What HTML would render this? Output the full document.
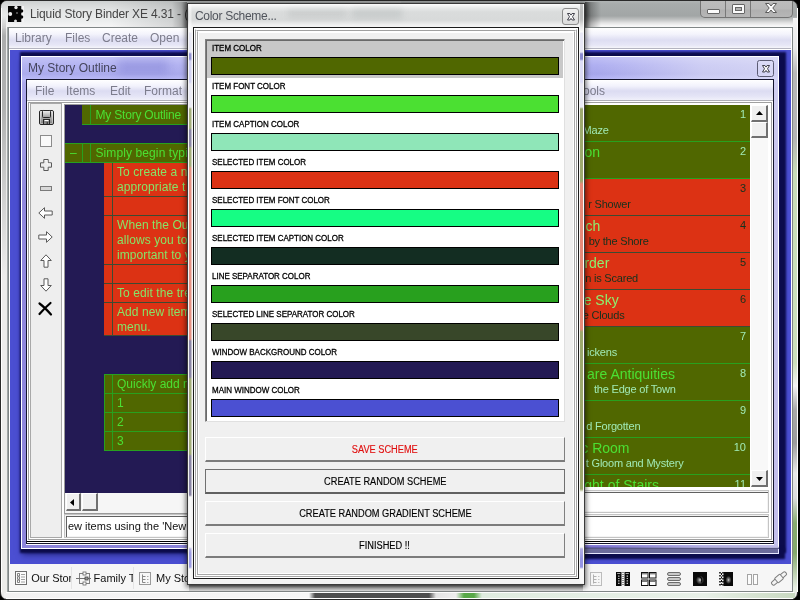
<!DOCTYPE html>
<html><head><meta charset="utf-8"><title>Liquid Story Binder XE 4.31</title>
<style>
*{box-sizing:border-box;margin:0;padding:0}
html,body{width:800px;height:600px;overflow:hidden;background:#000}
body{position:relative;font-family:"Liberation Sans",sans-serif;font-size:12px;color:#000}
#root{position:absolute;left:0;top:0;width:800px;height:600px;will-change:transform}
.a{position:absolute}
.t{position:absolute;white-space:nowrap;line-height:1}
svg{position:absolute;overflow:visible}
#mw{left:0;top:0;width:798px;height:600px;border-radius:7px;background:linear-gradient(180deg,#b0b4b4 0,#a8acac 3px,#a2a6a6 15px,#c4c6c6 19px,#e4e4e4 22px,#f8f8f8 25px,#f8f8f8 27px,#ececec 28px,#ececea 100%);border:1px solid #2a2a2a;overflow:hidden}
#mtitle{left:1px;top:1px;width:400px;height:26px;border-radius:6px 0 0 0;background:linear-gradient(90deg,rgba(120,124,124,0) 0,rgba(120,124,124,0) 110px,rgba(120,124,124,.3) 187px),linear-gradient(180deg,#cdd0d0 0,#d8dada 4px,#e4e6e6 10px,#eceeee 20px,#f4f4f4 25px)}
#mclient{left:8px;top:27px;width:785px;height:565px;border:1px solid #808686;background:#fff}
#mmenu{left:9px;top:28px;width:782px;height:21px;background:linear-gradient(180deg,#ffffff 0,#f4f4fc 6px,#dedef2 12px,#e6e6f6 17px,#f4f4fa 20px);border-bottom:1px solid #b4b4c0}
.menu{font-size:12px;color:#7c7c8c}
#mdi{left:10px;top:50px;width:782px;height:514px;background:#4b4fd2;border-right:1px solid #fff}
#tabbar{left:9px;top:564px;width:783px;height:27px;background:#f6f6f6}
.ol{color:#4be032;font-size:12px;letter-spacing:-0.2px}
.olr{color:#86e468;font-size:12px;letter-spacing:.08px}
.lab{font-size:9px;color:#000;-webkit-text-stroke:.3px #000;transform:scaleX(.887);transform-origin:0 0}
.btn{background:#f0f0f0;border:1px solid #fff;border-right-color:#808080;border-bottom:2px solid #7c7c7c;text-align:center;font-size:10px;line-height:23px;-webkit-text-stroke:.15px currentColor}
.btn span{display:inline-block;transform:scaleX(.923)}
.tt{font-size:14px}
.cp{font-size:11px;letter-spacing:-.2px}
.num{font-size:11px;text-align:right}
</style></head><body>
<div id="root">
<div id="mw" class="a"></div><div id="mtitle" class="a"></div><div id="mclient" class="a"></div><div id="mmenu" class="a"></div><div id="mdi" class="a"></div><div id="tabbar" class="a"></div>
<div class="t" style="left:30px;top:8px;font-size:12px;letter-spacing:-.13px;color:#444">Liquid Story Binder XE 4.31 - (</div>
<div class="t menu" style="left:15px;top:32px;">Library</div>
<div class="t menu" style="left:65px;top:32px;">Files</div>
<div class="t menu" style="left:102px;top:32px;">Create</div>
<div class="t menu" style="left:150px;top:32px;">Open</div>
<svg style="left:8px;top:6px" width="16" height="16" viewBox="0 0 16 16"><rect x="0" y="0" width="13.500" height="16" fill="#050505"/><rect x="13.500" y="0" width="2.500" height="16" fill="#f4f4f4"/><circle cx="8" cy="1.500" r="1.700" fill="#e8e8e8"/><circle cx="2.200" cy="8" r="2" fill="#f0f0f0"/><circle cx="7.500" cy="15" r="1.500" fill="#ddd"/><circle cx="13.500" cy="5" r="1.800" fill="#050505"/><circle cx="13.500" cy="11" r="1.800" fill="#050505"/><circle cx="9" cy="7" r="1" fill="#666"/></svg>
<div class="a" style="left:793px;top:18px;width:4px;height:574px;background:linear-gradient(180deg,#f4f4f4 0,#eaeaea 30px,#b8b8b8 55px,#b4b4b4 120px,#c8dcb8 155px,#cce0bc 345px,#f4f4f4 368px,#a8a8a8 392px,#9c9c9c 425px,#e8e8e8 455px,#dcdcdc 480px,#88ac70 505px,#84a86c 535px,#e8efe4 570px)"></div>
<div class="a" style="left:797px;top:8px;width:1px;height:584px;background:#fff"></div>
<div class="a" style="left:6px;top:592px;width:788px;height:1px;background:#fff"></div>
<div class="a" style="left:4px;top:593px;width:791px;height:5px;background:linear-gradient(90deg,#f2f2f2 0,#f6f6f6 305px,#4e4e4e 311px,#4e4e4e 425px,#e4e4e4 432px,#eeeeee 452px,#58a848 460px,#58a848 470px,#e0ece0 478px,#e8f0e8 700px,#c8d8c0 791px)"></div>
<div class="a" style="left:6px;top:598px;width:787px;height:1px;background:#fff"></div>
<div class="a" style="left:1px;top:8px;width:1px;height:584px;background:#fff"></div>
<div class="a" style="left:2px;top:16px;width:4px;height:260px;background:linear-gradient(180deg,rgba(150,152,152,.0),rgba(150,152,152,.75) 20px,rgba(150,152,152,.7) 90px,rgba(150,152,152,0))"></div>
<div class="a" style="left:7px;top:27px;width:1px;height:565px;background:#a0a6a6"></div>
<div class="a" style="left:700px;top:1px;width:93px;height:17px;border:1px solid #747474;border-top:none;border-radius:0 0 5px 5px;background:linear-gradient(180deg,#bcbcbc 0,#b8b8b8 8px,#b0b0b0 9px,#b6b6b6 16px)"></div>
<div class="a" style="left:725px;top:1px;width:1px;height:16px;background:#787878"></div>
<div class="a" style="left:750px;top:1px;width:1px;height:16px;background:#787878"></div>
<div class="a" style="left:707px;top:9px;width:13px;height:5px;background:#fafafa;border:1px solid #666;border-radius:1px"></div>
<div class="a" style="left:732px;top:4px;width:13px;height:10px;background:#fafafa;border:1px solid #666;border-radius:1px"></div>
<div class="a" style="left:735px;top:7px;width:7px;height:4px;background:#b4b4b4;border:1px solid #666"></div>
<svg style="left:764px;top:3px" width="14" height="11" viewBox="0 0 14 11"><path d="M1.500 .5H5l2 2.500L9 .5h3.500L8.800 5l3.700 4.500H9L7 7 5 9.500H1.500L5.200 5z" fill="#fafafa" stroke="#5c5c5c" stroke-width="1"/></svg>
<div class="a" style="left:21px;top:56px;width:758px;height:493px;background:linear-gradient(180deg,#bcbcf5 0,#acacf0 8px,#a2a2ea 17px,#b2b2f6 22px,#a4a0ea 26px,#847cda 140px,#8078d8 100%);border:1px solid #fff;box-shadow:3px 0 2px 4px #0b0b4c,2px 5px 6px 1px rgba(10,10,70,.55)"></div>
<div class="a" style="left:500px;top:549px;width:279px;height:5px;background:#6c6c9c;border-bottom:1px solid #e8e8ff;border-right:1px solid #e8e8ff;box-shadow:3px 2px 2px 3px #0b0b4c"></div>
<div class="a" style="left:22px;top:57px;width:756px;height:491px;background:linear-gradient(90deg,rgba(255,255,255,.1) 0,rgba(255,255,255,.05) 575px,rgba(240,240,248,.5) 680px,rgba(240,240,248,.6) 100%)"></div>
<div class="a" style="left:118px;top:60px;width:50px;height:14px;background:rgba(110,110,200,.35);filter:blur(5px)"></div>
<div class="t" style="left:28px;top:62px;font-size:12px;color:#44445c">My Story Outline</div>
<div class="a" style="left:757px;top:60px;width:17px;height:17px;border:1px solid #5c5c74;border-radius:2.500px;background:rgba(255,255,255,.12)"></div>
<svg style="left:761.500px;top:64.700px" width="8" height="7.500" viewBox="0 0 8 7.500"><path d="M.5 .5H2.900L4 2.100 5.100 .5H7.500L5.500 3.750 7.500 7H5.100L4 5.400 2.900 7H.5L2.500 3.750z" fill="#fff" stroke="#2c2c38" stroke-width=".9"/></svg>
<div class="a" style="left:26px;top:79px;width:748px;height:465px;background:#fff;border:1px solid #14142c"></div>
<div class="a" style="left:27px;top:80px;width:746px;height:20px;background:linear-gradient(180deg,#ffffff 0,#f2f2fc 6px,#dcdcf2 11px,#e4e4f6 16px,#f0f0fa 20px)"></div>
<div class="a" style="left:27px;top:100px;width:746px;height:1px;background:#b0b0b8"></div>
<div class="t menu" style="left:35px;top:85px;">File</div>
<div class="t menu" style="left:66px;top:85px;">Items</div>
<div class="t menu" style="left:110px;top:85px;">Edit</div>
<div class="t menu" style="left:144px;top:85px;">Format</div>
<div class="t menu" style="left:583px;top:85px;">ools</div>
<div class="a" style="left:28px;top:102px;width:744px;height:438px;border:1px solid #a0a0a0;background:#fff"></div>
<div class="a" style="left:27px;top:541px;width:746px;height:1px;background:#000"></div>
<div class="a" style="left:26px;top:544px;width:748px;height:1px;background:#fff"></div>
<div class="a" style="left:30px;top:103px;width:32px;height:435px;background:#eeeeee;border:1px solid #a8a8a8"></div>
<svg style="left:39px;top:110px" width="15" height="15" viewBox="0 0 15 15"><defs><linearGradient id="sg" x1="0" y1="0" x2="0" y2="1"><stop offset="0" stop-color="#dcdcdc"/><stop offset="1" stop-color="#7e7e7e"/></linearGradient><linearGradient id="sg2" x1="0" y1="0" x2="0" y2="1"><stop offset="0" stop-color="#f4f4f4"/><stop offset="1" stop-color="#9c9c9c"/></linearGradient></defs><rect x=".5" y=".5" width="14" height="14" rx="1.500" fill="url(#sg)" stroke="#262626"/><rect x="1.500" y="1.500" width="12" height="12" fill="none" stroke="#fff" stroke-width=".7" opacity=".55"/><rect x="3.500" y=".5" width="8" height="7" rx=".8" fill="url(#sg2)" stroke="#262626"/><rect x="4.500" y="9.500" width="6" height="5" fill="#8a8a8a" stroke="#262626"/><path d="M5.500 10.500h4" stroke="#fff" stroke-width="1"/><rect x="7.600" y="12" width="1.400" height="2" fill="#444"/></svg>
<svg style="left:40px;top:135px" width="12" height="12" viewBox="0 0 12 12"><rect x=".5" y=".5" width="11" height="11" fill="#fafafa" stroke="#8c8c8c"/></svg>
<svg style="left:40px;top:159px" width="12" height="12" viewBox="0 0 12 12"><path d="M3.800 .5h4.400v3.300h3.300v4.400H8.200v3.300H3.800V8.200H.5V3.800h3.300z" fill="#ececec" stroke="#5a5a5a"/><path d="M4.800 1.500h2.400v3.300h3.300" fill="none" stroke="#fff" stroke-width=".8"/></svg>
<svg style="left:40px;top:186px" width="12" height="5" viewBox="0 0 12 5"><rect x=".5" y=".5" width="11" height="4" fill="#d8d8d8" stroke="#7a7a7a"/></svg>
<svg style="left:38px;top:207px" width="15" height="12" viewBox="0 0 15 12"><path d="M.8 6L6.500 .7v3.300h7.700v4H6.500v3.300z" fill="#fff" stroke="#5a5a5a"/></svg>
<svg style="left:38px;top:231px" width="15" height="12" viewBox="0 0 15 12"><path d="M14.200 6L8.500 .7v3.300H.8v4h7.700v3.300z" fill="#fff" stroke="#5a5a5a"/></svg>
<svg style="left:40px;top:254px" width="12" height="14" viewBox="0 0 12 14"><path d="M6 .8L.7 6.500h3.300v6.700h4V6.500h3.300z" fill="#fff" stroke="#5a5a5a"/></svg>
<svg style="left:40px;top:278px" width="12" height="14" viewBox="0 0 12 14"><path d="M6 13.200L.7 7.500h3.300V.8h4v6.700h3.300z" fill="#fff" stroke="#5a5a5a"/></svg>
<svg style="left:38px;top:302px" width="15" height="14" viewBox="0 0 15 14"><path d="M1.500 1.500C5 4 9 8 13 12.500M12.500 1C9 4 5 8 1.500 12" fill="none" stroke="#000" stroke-width="2.200" stroke-linecap="round"/></svg>
<div class="a" style="left:64px;top:104px;width:520px;height:410px;border:1px solid #9a9a9a;background:#f6f6f6"></div>
<div class="a" style="left:65px;top:105px;width:518px;height:388px;background:#231a54"></div>
<div class="a" style="left:82px;top:105px;width:510px;height:20px;background:#506700;border-bottom:1px solid #28a01e"></div>
<div class="a" style="left:90px;top:105px;width:1px;height:19px;background:#28a01e"></div>
<div class="t ol" style="left:95.5px;top:108.5px;">My Story Outline</div>
<div class="a" style="left:65px;top:143px;width:527px;height:20px;background:#506700;border-top:1px solid #28a01e;border-bottom:1px solid #28a01e"></div>
<div class="a" style="left:82px;top:144px;width:1px;height:18px;background:#28a01e"></div>
<div class="a" style="left:90px;top:144px;width:1px;height:18px;background:#28a01e"></div>
<div class="t ol" style="left:70px;top:146.5px;">–</div>
<div class="t ol" style="left:95.5px;top:146.5px;letter-spacing:.1px">Simply begin typing</div>
<div class="a" style="left:104px;top:163px;width:488px;height:173px;background:#dc3214"></div>
<div class="a" style="left:104px;top:196px;width:488px;height:1px;background:#3c4b32"></div>
<div class="a" style="left:104px;top:215px;width:488px;height:1px;background:#3c4b32"></div>
<div class="a" style="left:104px;top:264px;width:488px;height:1px;background:#3c4b32"></div>
<div class="a" style="left:104px;top:283px;width:488px;height:1px;background:#3c4b32"></div>
<div class="a" style="left:104px;top:302px;width:488px;height:1px;background:#3c4b32"></div>
<div class="a" style="left:104px;top:335px;width:488px;height:1px;background:#3c4b32"></div>
<div class="a" style="left:112px;top:163px;width:1px;height:173px;background:#3c4b32"></div>
<div class="t olr" style="left:117px;top:165.5px;">To create a new</div>
<div class="t olr" style="left:117px;top:180.5px;">appropriate t</div>
<div class="t olr" style="left:117px;top:218.5px;">When the Outline</div>
<div class="t olr" style="left:117px;top:233.5px;">allows you to</div>
<div class="t olr" style="left:117px;top:248.5px;">important to you</div>
<div class="t olr" style="left:117px;top:286.5px;">To edit the tree</div>
<div class="t olr" style="left:117px;top:305.5px;">Add new items</div>
<div class="t olr" style="left:117px;top:320.5px;">menu.</div>
<div class="a" style="left:104px;top:374px;width:488px;height:77px;background:#506700;border:1px solid #28a01e"></div>
<div class="a" style="left:104px;top:393px;width:488px;height:1px;background:#28a01e"></div>
<div class="a" style="left:104px;top:412px;width:488px;height:1px;background:#28a01e"></div>
<div class="a" style="left:104px;top:431px;width:488px;height:1px;background:#28a01e"></div>
<div class="a" style="left:112px;top:374px;width:1px;height:77px;background:#28a01e"></div>
<div class="t ol" style="left:117px;top:377.5px;letter-spacing:0">Quickly add new</div>
<div class="t ol" style="left:117px;top:396.5px;">1</div>
<div class="t ol" style="left:117px;top:415.5px;">2</div>
<div class="t ol" style="left:117px;top:434.5px;">3</div>
<div class="a" style="left:66px;top:493px;width:15px;height:18px;background:#f0f0f0;border:1px solid #fff;border-right:2px solid #707070;border-bottom:2px solid #707070"></div>
<svg style="left:70px;top:499px" width="4" height="7"><path d="M4 0v7L0 3.500z" fill="#000"/></svg>
<div class="a" style="left:82px;top:493px;width:16px;height:18px;background:#f0f0f0;border:1px solid #fff;border-right:2px solid #707070;border-bottom:2px solid #707070"></div>
<div class="a" style="left:64px;top:514px;width:530px;height:24px;background:#fff;border:1px solid #c4c4c4;box-shadow:inset 1px 1px 0 #f2f2f2,inset 2px 2px 0 #606060,inset -1px -1px 0 #f4f4f4"></div>
<div class="t" style="left:68px;top:521px;font-size:11px;color:#111">ew items using the 'New</div>
<div class="a" style="left:584px;top:105px;width:166px;height:382px;background:#506700"></div>
<div class="a" style="left:560px;top:105px;width:190px;height:382px;overflow:hidden">
<div class="a" style="left:0;top:0px;width:190px;height:37px;background:#506700;border-bottom:1px solid #28a01e">
<div class="t cp" style="right:141.4px;top:20px;color:#a0eab4">Maze</div>
<div class="t num" style="right:4px;top:4px;color:#a0eab4">1</div></div>
<div class="a" style="left:0;top:37px;width:190px;height:37px;background:#506700;border-bottom:1px solid #28a01e">
<div class="t tt" style="right:150.0px;top:3px;color:#4be032">on</div>
<div class="t num" style="right:4px;top:4px;color:#a0eab4">2</div></div>
<div class="a" style="left:0;top:74px;width:190px;height:37px;background:#dc3214;border-bottom:1px solid #3c4b32">
<div class="t cp" style="right:119.4px;top:20px;color:#14321e">r Shower</div>
<div class="t num" style="right:4px;top:4px;color:#14321e">3</div></div>
<div class="a" style="left:0;top:111px;width:190px;height:37px;background:#dc3214;border-bottom:1px solid #3c4b32">
<div class="t tt" style="right:149.6px;top:3px;color:#8cf070">ch</div>
<div class="t cp" style="right:101.4px;top:20px;color:#14321e">by the Shore</div>
<div class="t num" style="right:4px;top:4px;color:#14321e">4</div></div>
<div class="a" style="left:0;top:148px;width:190px;height:37px;background:#dc3214;border-bottom:1px solid #3c4b32">
<div class="t tt" style="right:140.7px;top:3px;color:#8cf070">rder</div>
<div class="t cp" style="right:112.0px;top:20px;color:#14321e">n is Scared</div>
<div class="t num" style="right:4px;top:4px;color:#14321e">5</div></div>
<div class="a" style="left:0;top:185px;width:190px;height:37px;background:#dc3214;border-bottom:1px solid #3c4b32">
<div class="t tt" style="right:131.3px;top:3px;color:#8cf070">e Sky</div>
<div class="t cp" style="right:125.5px;top:20px;color:#14321e">e Clouds</div>
<div class="t num" style="right:4px;top:4px;color:#14321e">6</div></div>
<div class="a" style="left:0;top:222px;width:190px;height:37px;background:#506700;border-bottom:1px solid #28a01e">
<div class="t cp" style="right:133.0px;top:20px;color:#a0eab4">ickens</div>
<div class="t num" style="right:4px;top:4px;color:#a0eab4">7</div></div>
<div class="a" style="left:0;top:259px;width:190px;height:37px;background:#506700;border-bottom:1px solid #28a01e">
<div class="t tt" style="right:75.0px;top:3px;color:#4be032">are Antiquities</div>
<div class="t cp" style="right:74.4px;top:20px;color:#a0eab4">the Edge of Town</div>
<div class="t num" style="right:4px;top:4px;color:#a0eab4">8</div></div>
<div class="a" style="left:0;top:296px;width:190px;height:37px;background:#506700;border-bottom:1px solid #28a01e">
<div class="t cp" style="right:109.7px;top:20px;color:#a0eab4">d Forgotten</div>
<div class="t num" style="right:4px;top:4px;color:#a0eab4">9</div></div>
<div class="a" style="left:0;top:333px;width:190px;height:37px;background:#506700;border-bottom:1px solid #28a01e">
<div class="t tt" style="right:120.5px;top:3px;color:#4be032">c Room</div>
<div class="t cp" style="right:66.5px;top:20px;color:#a0eab4">t Gloom and Mystery</div>
<div class="t num" style="right:4px;top:4px;color:#a0eab4">10</div></div>
<div class="a" style="left:0;top:370px;width:190px;height:37px;background:#506700;border-bottom:1px solid #28a01e">
<div class="t tt" style="right:91.0px;top:3px;color:#4be032">ght of Stairs</div>
<div class="t num" style="right:4px;top:4px;color:#a0eab4">11</div></div>
</div>
<div class="a" style="left:751px;top:105px;width:17px;height:382px;background:#f8f8f8"></div>
<div class="a" style="left:751px;top:105px;width:17px;height:17px;background:#f0f0f0;border:1px solid #fff;border-right:2px solid #707070;border-bottom:2px solid #707070"></div>
<svg style="left:756px;top:111px" width="7" height="4"><path d="M0 4h7L3.500 0z" fill="#000"/></svg>
<div class="a" style="left:751px;top:122px;width:17px;height:16px;background:#f0f0f0;border:1px solid #fff;border-right:2px solid #707070;border-bottom:2px solid #707070"></div>
<div class="a" style="left:751px;top:470px;width:17px;height:17px;background:#f0f0f0;border:1px solid #fff;border-right:2px solid #707070;border-bottom:2px solid #707070"></div>
<svg style="left:756px;top:477px" width="7" height="4"><path d="M0 0h7L3.500 4z" fill="#000"/></svg>
<div class="a" style="left:560px;top:490px;width:209px;height:23px;background:#fff;border:1px solid #c4c4c4;box-shadow:inset 1px 1px 0 #f2f2f2,inset 2px 2px 0 #606060,inset -1px -1px 0 #f4f4f4"></div>
<div class="a" style="left:560px;top:514px;width:209px;height:24px;background:#fff;border:1px solid #c4c4c4;box-shadow:inset 1px 1px 0 #f2f2f2,inset 2px 2px 0 #606060,inset -1px -1px 0 #f4f4f4"></div>
<div class="a" style="left:31px;top:572px;width:40px;height:14px;overflow:hidden"><div class="t" style="left:.3px;top:1px;font-size:11px;letter-spacing:-.1px;color:#111">Our Story</div></div>
<div class="a" style="left:93px;top:572px;width:39.5px;height:14px;overflow:hidden"><div class="t" style="left:.6px;top:1px;font-size:11px;color:#111">Family Tree</div></div>
<div class="a" style="left:155px;top:572px;width:32px;height:14px;overflow:hidden"><div class="t" style="left:1px;top:1px;font-size:11px;color:#111">My Story</div></div>
<div class="a" style="left:71px;top:567px;width:1px;height:22px;background:#e4e4e4"></div>
<div class="a" style="left:133px;top:567px;width:1px;height:22px;background:#e4e4e4"></div>
<svg style="left:15px;top:571px" width="12" height="14" viewBox="0 0 12 14"><rect x=".5" y=".5" width="11" height="13" fill="#fbfbfb" stroke="#6e6e6e"/><path d="M2.500 2.500h2v2.500h-2zM2.500 5.750h2v2.500h-2zM2.500 9h2v2.500h-2z" fill="#fff" stroke="#666" stroke-width=".8"/><path d="M6 3.500h4M6 6h4M6 8.500h4M6 11h4" stroke="#a0a0a0" stroke-width="1"/></svg>
<svg style="left:76px;top:571px" width="15" height="14" viewBox="0 0 15 14"><rect x="3.500" y="2.500" width="10" height="10" fill="none" stroke="#808080" stroke-width="1"/><path d="M0 7.500h15" stroke="#707070" stroke-width="1"/><rect x="7" y="1" width="3" height="3" fill="#fff" stroke="#666" stroke-width=".8"/><rect x="7" y="11" width="3" height="3" fill="#fff" stroke="#666" stroke-width=".8"/><rect x="9" y="6" width="3" height="3" fill="#999" stroke="#444" stroke-width=".8"/></svg>
<svg style="left:139px;top:572px" width="12" height="13" viewBox="0 0 12 13"><rect x=".5" y=".5" width="11" height="12" fill="#f8f8f8" stroke="#9a9a9a"/><path d="M3.500 2.500v8M3.500 4.500h3M3.500 7.500h3M3.500 10.500h3" stroke="#888" stroke-width="1" fill="none"/><path d="M8 4.500h1.500M8 7.500h1.500M8 10.500h1.500" stroke="#aaa" stroke-width="1"/></svg>
<svg style="left:590px;top:572px" width="12" height="14" viewBox="0 0 12 14"><rect x=".5" y=".5" width="11" height="13" fill="#f6f6f6" stroke="#bcbcbc"/><path d="M3.500 2.500v9M3.500 4.500h3M3.500 7.500h3M3.500 10.500h3" stroke="#b0b0b0" stroke-width="1" fill="none"/><path d="M8 4.500h1.500M8 7.500h1.500M8 10.500h1.500" stroke="#c4c4c4" stroke-width="1"/></svg>
<svg style="left:616px;top:572px" width="14" height="14" viewBox="0 0 14 14"><rect x="0" y="0" width="5.500" height="14" fill="#0a0a0a"/><rect x="8.500" y="0" width="5.500" height="14" fill="#0a0a0a"/><path d="M7 0v14" stroke="#222" stroke-width="1" stroke-dasharray="1 1"/><path d="M1.200 1.500h3.100M9.700 1.500h3.100" stroke="#aaa" stroke-width="1"/><path d="M2.800 3.500v9M11.300 3.500v9" stroke="#ccc" stroke-width="1.400" stroke-dasharray="1.200 1.200"/></svg>
<svg style="left:641px;top:572px" width="16" height="14" viewBox="0 0 16 14"><g fill="#fdfdfd" stroke="#111" stroke-width="1"><rect x=".5" y=".5" width="6.500" height="5.500"/><rect x="8.500" y=".5" width="6.500" height="5.500"/><rect x=".5" y="8" width="6.500" height="5.500"/><rect x="8.500" y="8" width="6.500" height="5.500"/></g><path d="M1 1.800h5.500M9 1.800h5.500M1 9.300h5.500M9 9.300h5.500" stroke="#555" stroke-width="1"/></svg>
<svg style="left:667px;top:572px" width="14" height="14" viewBox="0 0 14 14"><g fill="#c8c8c8" stroke="#6c6c6c" stroke-width="1"><rect x=".5" y=".5" width="13" height="3" rx="1.500"/><rect x=".5" y="5.500" width="13" height="3" rx="1.500"/><rect x=".5" y="10.500" width="13" height="3" rx="1.500"/></g></svg>
<svg width="0" height="0" style="left:0;top:0"><defs><radialGradient id="sw" cx=".5" cy=".55" r=".45"><stop offset="0" stop-color="#d8d8d8"/><stop offset=".35" stop-color="#777"/><stop offset="1" stop-color="#0a0a0a"/></radialGradient></defs></svg>
<svg style="left:693px;top:572px" width="14" height="14" viewBox="0 0 14 14"><rect width="14" height="14" fill="#0a0a0a"/><ellipse cx="7" cy="7.500" rx="4.500" ry="5" fill="url(#sw)"/><path d="M5 4.500c3 0 4.500 2 3.500 6" stroke="#0a0a0a" stroke-width="1.300" fill="none"/></svg>
<svg style="left:719px;top:572px" width="14" height="14" viewBox="0 0 14 14"><rect x="4.500" width="9.500" height="14" fill="#0a0a0a"/><path d="M1 0v14M4 0v14" stroke="#0a0a0a" stroke-width="1.600" stroke-dasharray="1.500 1.500"/><path d="M2.500 1v12" stroke="#0a0a0a" stroke-width="1" stroke-dasharray="2 1.500"/><ellipse cx="9.500" cy="7.500" rx="3.300" ry="4.500" fill="url(#sw)"/></svg>
<svg style="left:747px;top:574px" width="12" height="11" viewBox="0 0 12 11"><rect x=".5" y=".5" width="4" height="10" fill="#fcfcfc" stroke="#a4a4a4"/><rect x="6.500" y=".5" width="4" height="10" fill="#fcfcfc" stroke="#a4a4a4"/></svg>
<svg style="left:771px;top:571px" width="16" height="15" viewBox="0 0 16 15"><g transform="rotate(-40 8 7.500)" fill="#f4f4f4" stroke="#7c7c7c" stroke-width="1"><rect x="-1" y="5.500" width="7" height="4" rx="1.500"/><rect x="10" y="5.500" width="7" height="4" rx="1.500"/><rect x="4.500" y="4.500" width="7" height="6" rx="1"/></g></svg>
<div class="a" style="left:189px;top:585px;width:394px;height:6px;background:linear-gradient(180deg,rgba(0,0,0,.5),rgba(0,0,0,.22) 3px,rgba(0,0,0,.1))"></div>
<div class="a" style="left:585px;top:2px;width:16px;height:25px;background:linear-gradient(90deg,rgba(0,0,0,.55),rgba(0,0,0,.25) 6px,rgba(0,0,0,0))"></div>
<div class="a" style="left:172px;top:2px;width:15px;height:25px;background:linear-gradient(270deg,rgba(0,0,0,.4),rgba(0,0,0,.15) 6px,rgba(0,0,0,0))"></div>
<div class="a" style="left:187px;top:3px;width:398px;height:582px;background:linear-gradient(180deg,#fdfdfd 0,#e8eaea 4px,#dadcdc 8px,#d8dada 16px,#f0f0f0 21px,#f6f6f6 24px,#f2f2f2 100%);border:1px solid #3a3a3a;box-shadow:0 1px 5px 1px rgba(0,0,0,.6)"></div>
<div class="a" style="left:288px;top:9px;width:58px;height:9px;background:rgba(130,136,136,.16);filter:blur(3px)"></div>
<div class="a" style="left:352px;top:8px;width:50px;height:11px;background:rgba(130,136,136,.18);filter:blur(3px)"></div>
<div class="t" style="left:195px;top:10px;font-size:12px;letter-spacing:-.3px;color:#50545c">Color Scheme...</div>
<div class="a" style="left:562px;top:8px;width:17px;height:17px;border:1px solid #8c8c8c;border-radius:3px;background:linear-gradient(180deg,#f0f0f0,#dcdcdc)"></div>
<svg style="left:566.500px;top:12.800px" width="8" height="7.500" viewBox="0 0 8 7.500"><path d="M.5 .5H2.900L4 2.100 5.100 .5H7.500L5.500 3.750 7.500 7H5.100L4 5.400 2.900 7H.5L2.500 3.750z" fill="#fff" stroke="#2c2c38" stroke-width=".9"/></svg>
<div class="a" style="left:193px;top:27px;width:386px;height:552px;background:#f0f0f0;border:1px solid #1c1c1c"></div>
<div class="a" style="left:194px;top:28px;width:384px;height:550px;border:1px solid #fff"></div>
<div class="a" style="left:195px;top:29px;width:382px;height:548px;border:1px solid #a8a8a8;border-top-color:#fff"></div>
<div class="a" style="left:196px;top:30px;width:380px;height:546px;border:1px solid #fff;border-top-color:#a0a0a0"></div>
<div class="a" style="left:197px;top:31px;width:378px;height:544px;border:1px solid #a8a8a8;border-top-color:#fff"></div>
<div class="a" style="left:198px;top:32px;width:376px;height:542px;border:1px solid #fff"></div>
<div class="a" style="left:189px;top:4px;width:2px;height:579px;background:linear-gradient(180deg,#fff 0,#fff 28px,#dcdcf4 29px,#dcdcf4 48px,#3030b0 50px,#3030b0 55px,#b0b0f0 57px,#b0b0f0 78px,#e0e0f4 80px,#e0e0f4 103px,#556b00 105px,#556b00 124px,#231a5a 126px,#231a5a 142px,#556b00 144px,#556b00 162px,#dc3214 164px,#dc3214 335px,#231a5a 337px,#231a5a 373px,#556b00 375px,#556b00 450px,#231a5a 452px,#231a5a 491px,#fff 493px,#fff 543px,#8078d8 545px,#4848d8 549px,#4848d8 563px,#fff 565px,#fff 100%);opacity:.5"></div>
<div class="a" style="left:191px;top:4px;width:1px;height:579px;background:linear-gradient(180deg,#fff 0,#fff 28px,#dcdcf4 29px,#dcdcf4 48px,#3030b0 50px,#3030b0 55px,#b0b0f0 57px,#b0b0f0 78px,#e0e0f4 80px,#e0e0f4 103px,#556b00 105px,#556b00 124px,#231a5a 126px,#231a5a 142px,#556b00 144px,#556b00 162px,#dc3214 164px,#dc3214 335px,#231a5a 337px,#231a5a 373px,#556b00 375px,#556b00 450px,#231a5a 452px,#231a5a 491px,#fff 493px,#fff 543px,#8078d8 545px,#4848d8 549px,#4848d8 563px,#fff 565px,#fff 100%);opacity:.25"></div>
<div class="a" style="left:580px;top:4px;width:3px;height:579px;background:linear-gradient(180deg,#999 0,#aaa 15px,#fff 28px,#dcdcf4 29px,#dcdcf4 48px,#3030b0 50px,#3030b0 55px,#c8c8f4 57px,#c8c8f4 78px,#e0e0f4 80px,#e0e0f4 103px,#556b00 105px,#556b00 177px,#dc3214 180px,#dc3214 325px,#556b00 328px,#556b00 485px,#fff 488px,#fff 543px,#8078d8 545px,#4848d8 555px,#4848d8 563px,#fff 565px,#fff 100%);opacity:.55"></div>
<div class="a" style="left:583px;top:4px;width:1px;height:580px;background:#fff;opacity:.6"></div>
<div class="a" style="left:205px;top:39px;width:360px;height:383px;background:#fff;border:1px solid #828282;border-right-color:#e0e0e0;border-bottom-color:#e0e0e0"></div>
<div class="a" style="left:206px;top:40px;width:358px;height:1px;background:#6a6a6a"></div>
<div class="a" style="left:206px;top:40px;width:1px;height:381px;background:#6a6a6a"></div>
<div class="a" style="left:207px;top:41px;width:356px;height:37px;background:#c8c8c8"></div>
<div class="t lab" style="left:212px;top:44px;">ITEM COLOR</div>
<div class="a" style="left:211px;top:57px;width:348px;height:18px;background:#506700;border:1px solid #000"></div>
<div class="t lab" style="left:212px;top:82px;">ITEM FONT COLOR</div>
<div class="a" style="left:211px;top:95px;width:348px;height:18px;background:#4be032;border:1px solid #000"></div>
<div class="t lab" style="left:212px;top:120px;">ITEM CAPTION COLOR</div>
<div class="a" style="left:211px;top:133px;width:348px;height:18px;background:#8fe6b8;border:1px solid #000"></div>
<div class="t lab" style="left:212px;top:158px;">SELECTED ITEM COLOR</div>
<div class="a" style="left:211px;top:171px;width:348px;height:18px;background:#dc3214;border:1px solid #000"></div>
<div class="t lab" style="left:212px;top:196px;">SELECTED ITEM FONT COLOR</div>
<div class="a" style="left:211px;top:209px;width:348px;height:18px;background:#16fd84;border:1px solid #000"></div>
<div class="t lab" style="left:212px;top:234px;">SELECTED ITEM CAPTION COLOR</div>
<div class="a" style="left:211px;top:247px;width:348px;height:18px;background:#132d22;border:1px solid #000"></div>
<div class="t lab" style="left:212px;top:272px;">LINE SEPARATOR COLOR</div>
<div class="a" style="left:211px;top:285px;width:348px;height:18px;background:#28a01e;border:1px solid #000"></div>
<div class="t lab" style="left:212px;top:310px;">SELECTED LINE SEPARATOR COLOR</div>
<div class="a" style="left:211px;top:323px;width:348px;height:18px;background:#384729;border:1px solid #000"></div>
<div class="t lab" style="left:212px;top:348px;">WINDOW BACKGROUND COLOR</div>
<div class="a" style="left:211px;top:361px;width:348px;height:18px;background:#231a54;border:1px solid #000"></div>
<div class="t lab" style="left:212px;top:386px;">MAIN WINDOW COLOR</div>
<div class="a" style="left:211px;top:399px;width:348px;height:18px;background:#4b50d2;border:1px solid #000"></div>
<div class="a btn" style="left:205px;top:437px;width:360px;height:25px;color:#e01010;"><span>SAVE SCHEME</span></div>
<div class="a btn" style="left:205px;top:469px;width:360px;height:25px;color:#000;border:1px solid #707070;border-bottom:2px solid #606060;"><span>CREATE RANDOM SCHEME</span></div>
<div class="a btn" style="left:205px;top:501px;width:360px;height:25px;color:#000;"><span>CREATE RANDOM GRADIENT SCHEME</span></div>
<div class="a btn" style="left:205px;top:533px;width:360px;height:25px;color:#000;"><span>FINISHED !!</span></div>
</div>
</body></html>
